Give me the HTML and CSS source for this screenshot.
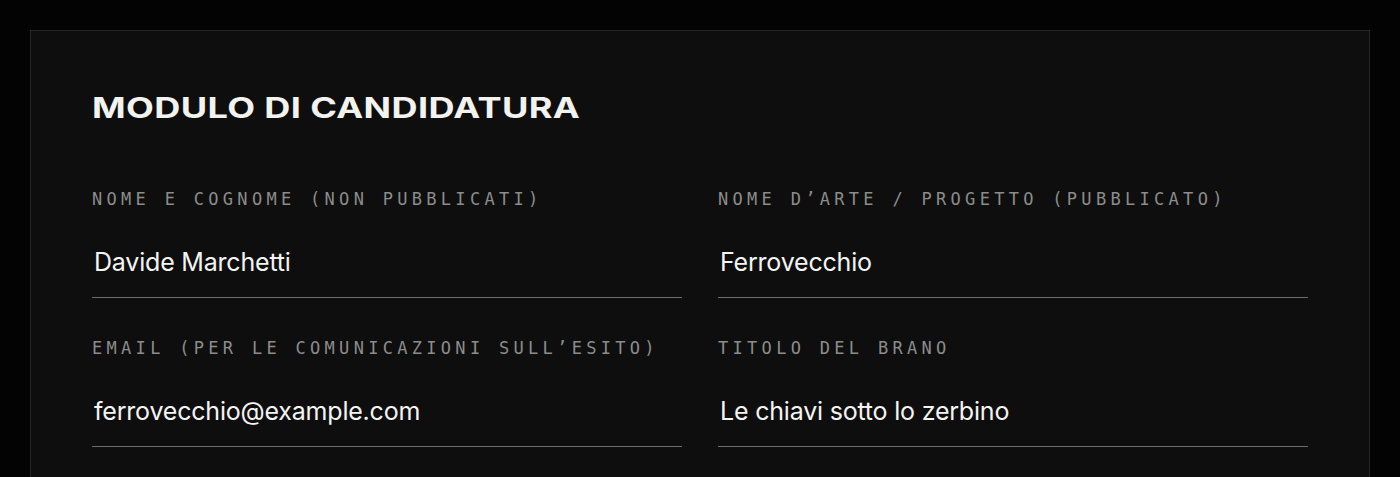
FILE: index.html
```html
<!DOCTYPE html>
<html lang="it">
<head>
<meta charset="utf-8">
<title>Modulo di candidatura</title>
<link rel="stylesheet" href="styles.css">
</head>
<body>
<main class="page">
  <section class="card">
    <h1 class="title"><span class="title-text">MODULO DI CANDIDATURA</span></h1>
    <form class="grid">
      <label class="field">
        <span class="label">Nome e cognome (non pubblicati)</span>
        <input class="input" type="text" value="Davide Marchetti">
      </label>
      <label class="field">
        <span class="label">Nome d’arte / progetto (pubblicato)</span>
        <input class="input" type="text" value="Ferrovecchio">
      </label>
      <label class="field">
        <span class="label">Email (per le comunicazioni sull’esito)</span>
        <input class="input" type="email" value="ferrovecchio@example.com">
      </label>
      <label class="field">
        <span class="label">Titolo del brano</span>
        <input class="input" type="text" value="Le chiavi sotto lo zerbino">
      </label>
    </form>
  </section>
</main>
</body>
</html>
```

FILE: styles.css
```css
* { box-sizing: border-box; }
html, body { margin: 0; padding: 0; background: #030303; }
body { font-family: "Inter", "Liberation Sans", sans-serif; color: #f2f2ee; }
.page { padding: 30px; }
.card {
  background: #0e0e0e;
  border: 1px solid #272727;
  padding: 60px 61px 60px;
}
.title {
  margin: 0 0 64px;
  font-size: 28px;
  line-height: 34px;
  font-weight: 700;
  letter-spacing: 0.01em;
}
.title-text {
  display: inline-block;
  transform: scaleX(1.29);
  transform-origin: left center;
}
.grid {
  display: grid;
  grid-template-columns: 1fr 1fr;
  column-gap: 36px;
  row-gap: 40px;
}
.field { display: flex; flex-direction: column; }
.label {
  font-family: "DejaVu Sans Mono", "Liberation Mono", monospace;
  font-size: 17px;
  line-height: 20px;
  letter-spacing: 4.3px;
  text-transform: uppercase;
  color: #8c8c8c;
  margin-bottom: 22px;
  white-space: nowrap;
}
.input {
  font-family: "Inter", "Liberation Sans", sans-serif;
  font-size: 25px;
  line-height: 32px;
  height: 67px;
  letter-spacing: -0.2px;
  color: #f4f4f2;
  background: transparent;
  border: 0;
  border-bottom: 1px solid #6c6c6c;
  padding: 15px 1px 19px 2px;
  outline: none;
  width: 100%;
}
```
